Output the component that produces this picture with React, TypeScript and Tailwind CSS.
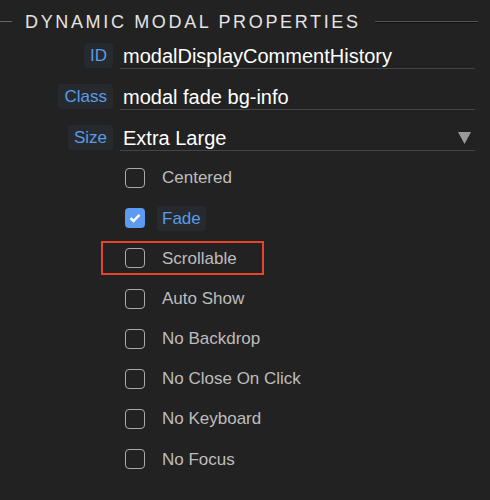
import React from 'react';

const fields = [
  { label: 'ID', value: 'modalDisplayCommentHistory' },
  { label: 'Class', value: 'modal fade bg-info' },
];

const options = [
  { label: 'Centered', checked: false },
  { label: 'Fade', checked: true },
  { label: 'Scrollable', checked: false, highlight: true },
  { label: 'Auto Show', checked: false },
  { label: 'No Backdrop', checked: false },
  { label: 'No Close On Click', checked: false },
  { label: 'No Keyboard', checked: false },
  { label: 'No Focus', checked: false },
];

function Label({ text }: { text: string }) {
  return (
    <div className="w-[113px] flex justify-end shrink-0">
      <span className="h-[25px] px-[6px] flex items-center rounded-[4px] bg-[#262a2f] text-[#5b9be6] text-[17px]">
        {text}
      </span>
    </div>
  );
}

export default function App() {
  return (
    <div
      className="w-[490px] h-[500px] bg-[#222222] overflow-hidden"
      style={{ fontFamily: '"Liberation Sans", Arial, sans-serif' }}
    >
      {/* Section title */}
      <div className="flex items-center pt-[8px] h-[36px]">
        <div className="w-[12px] h-[2px] border-t border-[#666] border-b-[#111]" />
        <div className="ml-[13px] text-[18px] tracking-[2.65px] text-[#e4e4e4] leading-none">
          DYNAMIC MODAL PROPERTIES
        </div>
        <div className="ml-[14px] mr-[12px] flex-1 h-[2px] border-t border-[#555] border-b border-b-[#111]" />
      </div>

      {/* Text fields */}
      <div className="flex flex-col gap-[15px] mt-[7px]">
        {fields.map((f) => (
          <div key={f.label} className="flex items-start">
            <Label text={f.label} />
            <div className="ml-[7px] mr-[15px] flex-1 h-[26px] border-b border-[#444] flex items-center pl-[3px] text-[20px] text-white">
              {f.value}
            </div>
          </div>
        ))}
        <div className="flex items-start">
          <Label text="Size" />
          <div className="ml-[7px] mr-[15px] flex-1 h-[26px] border-b border-[#444] flex items-center justify-between pl-[3px] pr-[4px] text-[20px] text-white">
            <span>Extra Large</span>
            <svg width="13" height="12" viewBox="0 0 13 12">
              <path d="M0 0 H13 L6.5 12 Z" fill="#9a9a9a" />
            </svg>
          </div>
        </div>
      </div>

      {/* Checkbox options */}
      <div className="flex flex-col pl-[125px] mt-[7px]">
        {options.map((o) => (
          <div key={o.label} className="relative h-[40.2px] flex items-center">
            {o.highlight && (
              <span className="absolute left-[-24px] top-[3px] w-[163px] h-[34px] border-[2.5px] border-[#e8432d]" />
            )}
            {o.checked ? (
              <span className="w-[20px] h-[20px] rounded-[4px] bg-[#5b9bf0] flex items-center justify-center">
                <svg width="12" height="10" viewBox="0 0 12 10">
                  <path d="M1.5 5.2 L4.5 8 L10.5 1.8" stroke="#fff" strokeWidth="2.4" fill="none" />
                </svg>
              </span>
            ) : (
              <span className="w-[20px] h-[20px] rounded-[4px] border-[1.5px] border-[#aaa]" />
            )}
            {o.checked ? (
              <span className="ml-[12px] h-[25px] px-[5px] flex items-center rounded-[4px] bg-[#262a2f] text-[#5b9be6] text-[17px]">
                {o.label}
              </span>
            ) : (
              <span className="ml-[17px] text-[17px] text-[#bdbdbd]">{o.label}</span>
            )}
          </div>
        ))}
      </div>
    </div>
  );
}
